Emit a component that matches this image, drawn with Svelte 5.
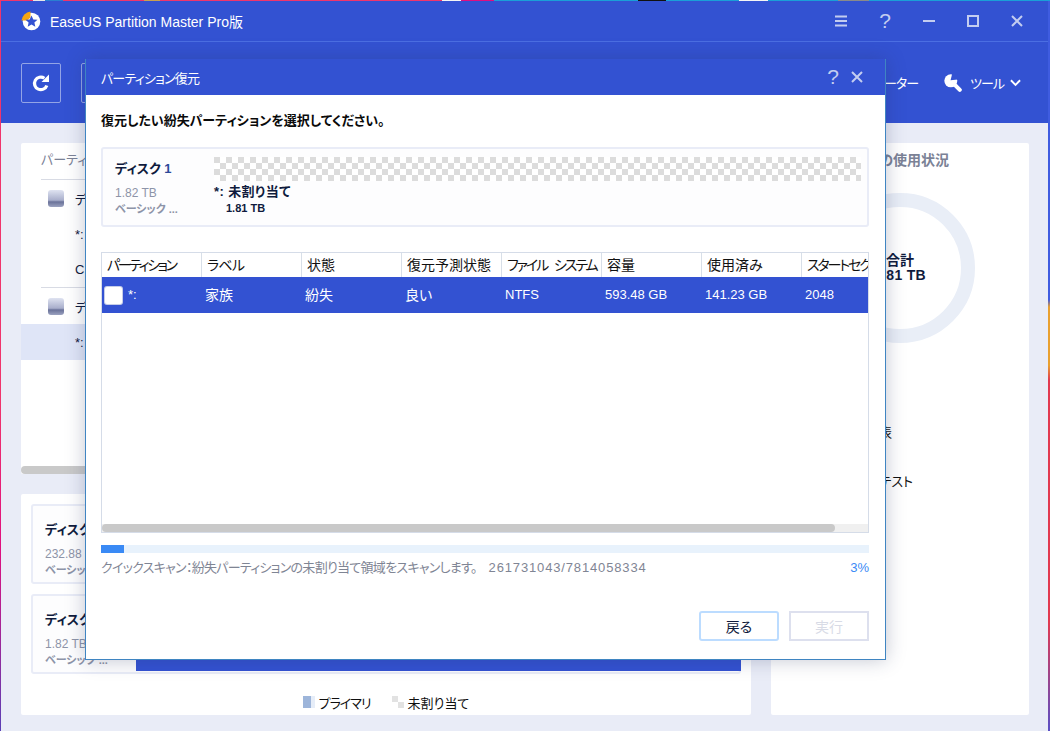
<script>
  const columns = [
    { head: 'パーティション', cell: '*:', tight: 'k1' },
    { head: 'ラベル', cell: '家族', tight: 'k3', big: true },
    { head: '状態', cell: '紛失', tight: '', big: true },
    { head: '復元予測状態', cell: '良い', tight: '', big: true },
    { head: 'ファイル システム', cell: 'NTFS', tight: 'k2' },
    { head: '容量', cell: '593.48 GB', tight: '' },
    { head: '使用済み', cell: '141.23 GB', tight: '' },
    { head: 'スタートセクター', cell: '2048', tight: 'k2' }
  ];
</script>

<div class="screen">
  <div class="window">
    <header class="titlebar">
      <div class="brand">
        <svg class="logo" viewBox="0 0 20 20" width="20" height="20">
          <circle cx="10.500" cy="10.500" r="8.800" fill="#fff" />
          <path d="M0.500 9.500A10 10 0 0 1 9.500 .5V6.500L6 9.500Z" fill="#f5a511" />
          <path d="M10.500 4.500l1.800 3.900 4.200.4-3.100 2.800.9 4.100-3.800-2.200-3.800 2.200.9-4.100L4.500 8.800l4.200-.4z" fill="#3352d2" />
        </svg>
        <span>EaseUS Partition Master Pro版</span>
      </div>
      <div class="winbtns">
        <svg viewBox="0 0 12 12" width="12" height="12"><path d="M0 1.500h12M0 6h12M0 10.500h12" stroke="#c3cdf0" stroke-width="2" /></svg>
        <span class="q">?</span>
        <svg viewBox="0 0 12 12" width="12" height="12"><path d="M0 6h12" stroke="#c3cdf0" stroke-width="2" /></svg>
        <svg viewBox="0 0 12 12" width="12" height="12"><rect x="1" y="1" width="10" height="10" fill="none" stroke="#c3cdf0" stroke-width="2" /></svg>
        <svg viewBox="0 0 12 12" width="12" height="12"><path d="M1 1l10 10M11 1L1 11" stroke="#c3cdf0" stroke-width="2" /></svg>
      </div>
    </header>

    <div class="toolbar">
      <div class="toolleft">
        <button class="iconbtn" aria-label="更新">
          <svg viewBox="0 0 20 20" width="20" height="20"><path d="M15.800 12.400A6.300 6.300 0 1 1 13.400 5.200" fill="none" stroke="#fff" stroke-width="3.200" /><path d="M10.500 9h7.500V1.500z" fill="#fff" /></svg>
        </button>
        <button class="iconbtn" aria-label="実行"></button>
      </div>
      <div class="toolright">
        <span class="tight">コンピューター</span>
        <span class="tools">
          <svg viewBox="0 0 18 18" width="18" height="18">
            <circle cx="6.800" cy="6.800" r="6.500" fill="#fff" />
            <path d="M6.600 6.200 8.200 -.5 14 .5 13.900 5.400Z" fill="#3352d2" />
            <path d="M8.500 8.500 15.800 15.800" stroke="#fff" stroke-width="4" stroke-linecap="round" />
          </svg>
          <span class="tight toolname">ツール</span>
          <svg viewBox="0 0 12 8" width="11" height="8"><path d="M1 1l5 5 5-5" fill="none" stroke="#fff" stroke-width="2" /></svg>
        </span>
      </div>
    </div>

    <main class="content">
      <div class="leftcol">
        <section class="treepanel">
          <div class="treehead">パーティション</div>
          <div class="treerow disk"><span class="hdd"></span>ディスク 0</div>
          <div class="treerow part">*:</div>
          <div class="treerow part last">C:</div>
          <div class="treerow disk"><span class="hdd"></span>ディスク 1</div>
          <div class="treerow part sel">*:</div>
          <div class="treescroll"><div class="treethumb"></div></div>
        </section>
        <section class="diskpanel">
          <div class="diskcard">
            <b>ディスク 0</b>
            <span class="size">232.88 GB</span>
            <span class="type">ベーシック ...</span>
          </div>
          <div class="diskcard">
            <b>ディスク 1</b>
            <span class="size">1.82 TB</span>
            <span class="type">ベーシック ...</span>
            <div class="bluebar"></div>
          </div>
          <div class="legend">
            <span class="swatch primary"></span><span class="tight">プライマリ</span>
            <span class="swatch free"></span><span>未割り当て</span>
          </div>
        </section>
      </div>

      <aside class="usage">
        <h2>ディスクの使用状況</h2>
        <div class="ringwrap">
          <svg viewBox="0 0 150 150" width="150" height="150"><circle cx="75" cy="75" r="68" fill="none" stroke="#e9eef7" stroke-width="14" /></svg>
          <div class="ringtext"><b>合計</b><b class="ringsize">1.81 TB</b></div>
        </div>
        <div class="action first">ディスク情報表</div>
        <div class="action second">サーフェス テスト</div>
      </aside>
    </main>
  </div>

  <div class="modal">
    <div class="mhead">
      <span class="mtitle">パーティション復元</span>
      <div class="mbtns">
        <span class="q">?</span>
        <svg viewBox="0 0 12 12" width="12" height="12"><path d="M1 1l10 10M11 1L1 11" stroke="#c3cdf0" stroke-width="2" /></svg>
      </div>
    </div>
    <div class="mbody">
      <h1>復元したい紛失パーティションを選択してください。</h1>
      <div class="card">
        <div class="cardinfo">
          <b>ディスク <span class="num">1</span></b>
          <span class="size">1.82 TB</span>
          <span class="type">ベーシック ...</span>
        </div>
        <div class="cardbar">
          <div class="checker"></div>
          <b class="alloc">*: 未割り当て</b>
          <b class="allocsize">1.81 TB</b>
        </div>
      </div>

      <div class="table">
        <div class="thead">
          {#each columns as c}<div class="th {c.tight}">{c.head}</div>{/each}
        </div>
        <div class="trow">
          {#each columns as c, i}
            <div class="td" class:big={c.big}>{#if i === 0}<span class="check"></span>{/if}{c.cell}</div>
          {/each}
        </div>
        <div class="tspace"></div>
        <div class="hscroll"><div class="hthumb"></div></div>
      </div>

      <div class="progress"><div class="fill"></div></div>
      <div class="status">
        <span><span class="scan">クイックスキャン：紛失パーティションの未割り当て領域をスキャンします。</span><span class="count">261731043/7814058334</span></span>
        <span class="pct">3%</span>
      </div>
      <div class="actions">
        <button class="back">戻る</button>
        <button class="run" disabled>実行</button>
      </div>
    </div>
  </div>
</div>

<style>
  :global(body) { margin: 0; }
  .screen {
    position: relative;
    width: 1050px;
    height: 731px;
    overflow: hidden;
    box-sizing: border-box;
    padding: 1px 2px 0 1px;
    font-family: "Liberation Sans", "Noto Sans CJK JP", sans-serif;
    font-feature-settings: "palt";
    font-size: 13px;
    color: #0f1b3d;
    background:
      linear-gradient(90deg, #f0356c 0 33px, #e8e8e8 33px 45px, #2a7fd0 45px 63px, #f0356c 63px 144px, #c9a050 144px 160px, #f0356c 160px 442px, #f5f5f5 442px 461px, #e00f80 461px 494px, #1a9fd8 494px 638px, #111 638px 666px, #1a9fd8 666px 739px, #f5f5f5 739px 768px, #1a9fd8 768px 838px, #8a8a8a 838px 869px, #1a9fd8 869px) top / 100% 1px no-repeat,
      linear-gradient(180deg, #3f5ce0 0 41%, #e9a030 42% 50%, #e23a50 52% 85%, #5a4fc5 100%) right / 2px 100% no-repeat,
      linear-gradient(180deg, #f0356c 0 55%, #e0107f 75%, #5a3fb5 100%);
  }
  .tight { letter-spacing: -1px; }
  .window { height: 730px; display: flex; flex-direction: column; background: #e9ecf7; }
  .titlebar {
    height: 41px;
    box-sizing: border-box;
    flex: none;
    background: #3352d2;
    border-bottom: 1px solid #4b6ee2;
    display: flex;
    align-items: center;
    justify-content: space-between;
    color: #fff;
  }
  .brand { display: flex; align-items: center; gap: 9px; padding-left: 20px; font-size: 14px; }
  .winbtns { display: flex; align-items: center; gap: 32px; padding-right: 25px; }
  .q { color: #c3cdf0; font-size: 21px; line-height: 20px; width: 12px; text-align: center; }
  .toolbar {
    height: 81px;
    flex: none;
    background: #3352d2;
    display: flex;
    align-items: center;
    justify-content: space-between;
    color: #fff;
  }
  .toolleft { display: flex; gap: 20px; padding-left: 20px; }
  .iconbtn {
    width: 40px;
    height: 40px;
    box-sizing: border-box;
    padding: 0;
    display: grid;
    place-items: center;
    background: none;
    border: 1px solid #93a4e6;
    border-radius: 2px;
  }
  .toolright { display: flex; align-items: center; gap: 26px; padding-right: 27px; }
  .tools { display: flex; align-items: center; gap: 8px; }
  .toolname { margin-right: -2px; }
  .content { flex: 1; display: flex; gap: 20px; padding: 20px 19px 16px 20px; min-height: 0; }
  .leftcol { width: 730px; display: flex; flex-direction: column; gap: 20px; }
  .treepanel { flex: none; height: 331px; background: #fff; border-radius: 2px; display: flex; flex-direction: column; }
  .treehead { box-sizing: border-box; margin: 0 0 0 20px; height: 37px; line-height: 34px; color: #7b8296; border-bottom: 1px solid #d8dbe4; }
  .treerow { height: 36px; flex: none; display: flex; align-items: center; padding-left: 54px; box-sizing: border-box; }
  .treerow.part.last { border-bottom: 1px solid #d8dbe4; margin-left: 20px; padding-left: 34px; }
  .treerow.disk { gap: 11px; padding-left: 27px; }
  .hdd {
    width: 16px;
    height: 17px;
    border-radius: 3px;
    background: linear-gradient(180deg, #dfe3f1 0, #a8aecb 60%, #6a7299 70%, #9ba2c0 100%);
  }
  .sel { background: #dfe5f7; }
  .treescroll { margin-top: auto; height: 8px; }
  .treethumb { width: 400px; height: 8px; border-radius: 4px; background: #c9c9c9; }
  .diskpanel { flex: 1; min-height: 0; background: #fff; padding: 10px 10px 0; box-sizing: border-box; display: flex; flex-direction: column; gap: 10px; border-radius: 2px; }
  .diskcard {
    position: relative;
    height: 80px;
    flex: none;
    box-sizing: border-box;
    background: #fdfdfe;
    border: 2px solid #e9ecf7;
    border-radius: 3px;
    padding: 13px 12px;
    display: flex;
    flex-direction: column;
  }
  .diskcard b { margin-bottom: 8px; }
  .size { color: #8d94a8; font-size: 12px; line-height: 16px; }
  .type { color: #8d94a8; font-size: 11px; font-weight: 700; line-height: 16px; }
  .bluebar { position: absolute; left: 103px; right: -2px; bottom: 1px; height: 11px; background: #3352d2; }
  .legend { display: flex; align-items: center; justify-content: center; gap: 4px; height: 22px; margin-top: 7px; color: #0f0f0f; flex: none; }
  .swatch { width: 12px; height: 12px; }
  .swatch.primary { background: linear-gradient(90deg, #9db5da 0 66%, #e6edf8 66%); }
  .swatch.free { margin-left: 17px; background: repeating-conic-gradient(#fff 0 25%, #e2e2e2 0 50%) 0 0 / 12px 12px; }
  .usage { width: 258px; background: #fff; border-radius: 2px; display: flex; flex-direction: column; }
  h2 { margin: 0; padding: 7px 0 0 0; font-size: 14px; line-height: 20px; color: #7b8296; text-align: right; width: 178px; }
  .ringwrap { margin: 23px 0 0 54px; width: 150px; height: 150px; display: grid; }
  .ringwrap svg, .ringtext { grid-area: 1 / 1; }
  .ringtext { display: flex; flex-direction: column; align-items: center; justify-content: center; line-height: 15px; font-size: 14px; }
  .ringsize { letter-spacing: .3px; }
  .action { color: #111; line-height: 16px; text-align: right; }
  .action.first { margin-top: 82px; width: 121px; }
  .action.second { margin-top: 33px; width: 142px; }

  .modal {
    position: absolute;
    left: 85px;
    top: 59px;
    width: 801px;
    height: 601px;
    box-sizing: border-box;
    display: flex;
    flex-direction: column;
    border: 1px solid #3f85c2;
    border-top: none;
    background: #fff;
    box-shadow: 0 0 18px rgba(40, 50, 90, 0.28);
  }
  .mhead {
    height: 36px;
    flex: none;
    background: #3352d2;
    color: #fff;
    display: flex;
    align-items: center;
    justify-content: space-between;
    padding: 0 22px 0 15px;
  }
  .mtitle { letter-spacing: -.8px; }
  .mbtns { display: flex; align-items: center; gap: 12px; }
  .mbody { flex: 1; padding: 0 16px 0 15px; display: flex; flex-direction: column; }
  h1 { margin: 0; padding-top: 17px; font-size: 13px; line-height: 18px; color: #0a0a0a; }
  .card {
    margin-top: 17px;
    height: 80px;
    flex: none;
    box-sizing: border-box;
    display: flex;
    background: #fdfdfe;
    border: 2px solid #e9ecf7;
    border-radius: 3px;
  }
  .cardinfo { box-sizing: border-box; width: 111px; padding: 11px 0 0 12px; display: flex; flex-direction: column; }
  .cardinfo b { line-height: 18px; margin-bottom: 7px; }
  .num { color: #2c4a9a; }
  .cardbar { flex: 1; padding: 8px 6px 0 0; display: flex; flex-direction: column; }
  .checker {
    height: 24px;
    background: repeating-conic-gradient(#fff 0 25%, #dcdcdc 0 50%) 0 0 / 12px 12px;
  }
  .alloc { font-size: 13px; line-height: 18px; margin-top: 2px; letter-spacing: .4px; }
  .allocsize { font-size: 11px; line-height: 15px; padding-left: 12px; }
  .table {
    margin-top: 25px;
    height: 281px;
    flex: none;
    box-sizing: border-box;
    border: 1px solid #d5dce8;
    display: flex;
    flex-direction: column;
    overflow: hidden;
  }
  .thead, .trow { display: grid; grid-template-columns: repeat(8, 100px); flex: none; }
  .thead { height: 24px; }
  .th {
    box-sizing: border-box;
    padding-left: 5px;
    line-height: 24px;
    font-size: 14px;
    color: #111;
    white-space: nowrap;
    overflow: hidden;
    border-right: 1px solid #d8dfe8;
  }
  .th.k1 { letter-spacing: -2.4px; }
  .th.k2 { letter-spacing: -2.1px; word-spacing: 5px; }
  .th.k3 { letter-spacing: -.7px; }
  .trow { height: 36px; background: #3352d2; color: #fff; width: 100%; }
  .td { display: flex; align-items: center; padding: 0 0 2px 3px; white-space: nowrap; }
  .td.big { font-size: 14px; }
  .check { width: 17px; height: 17px; margin: 2px 6px 0 0; background: #fff; border-radius: 2px; box-shadow: 0 0 0 1px #c5cde8; }
  .tspace { flex: 1; }
  .hscroll { height: 8px; background: #f0f0f0; flex: none; }
  .hthumb { width: 733px; height: 8px; border-radius: 4px; background: #c9c9c9; }
  .progress { margin-top: 12px; height: 8px; background: #e8f2fc; flex: none; }
  .fill { width: 23px; height: 8px; background: #3a8af5; }
  .status { display: flex; justify-content: space-between; margin-top: 6px; line-height: 18px; color: #7f8594; font-size: 13px; }
  .scan { letter-spacing: -.72px; }
  .count { margin-left: 12px; letter-spacing: .85px; }
  .pct { color: #3a8af5; }
  .actions { display: flex; justify-content: flex-end; gap: 10px; margin-top: 34px; }
  .actions button {
    width: 80px;
    height: 30px;
    box-sizing: border-box;
    background: #fff;
    font: inherit;
    font-size: 14px;
    padding: 0;
  }
  .back { border: 2px solid #bcdcff; border-radius: 3px; color: #0f1b3d; }
  .run { border: 2px solid #dde0ee; color: #d8dbe6; }
</style>
